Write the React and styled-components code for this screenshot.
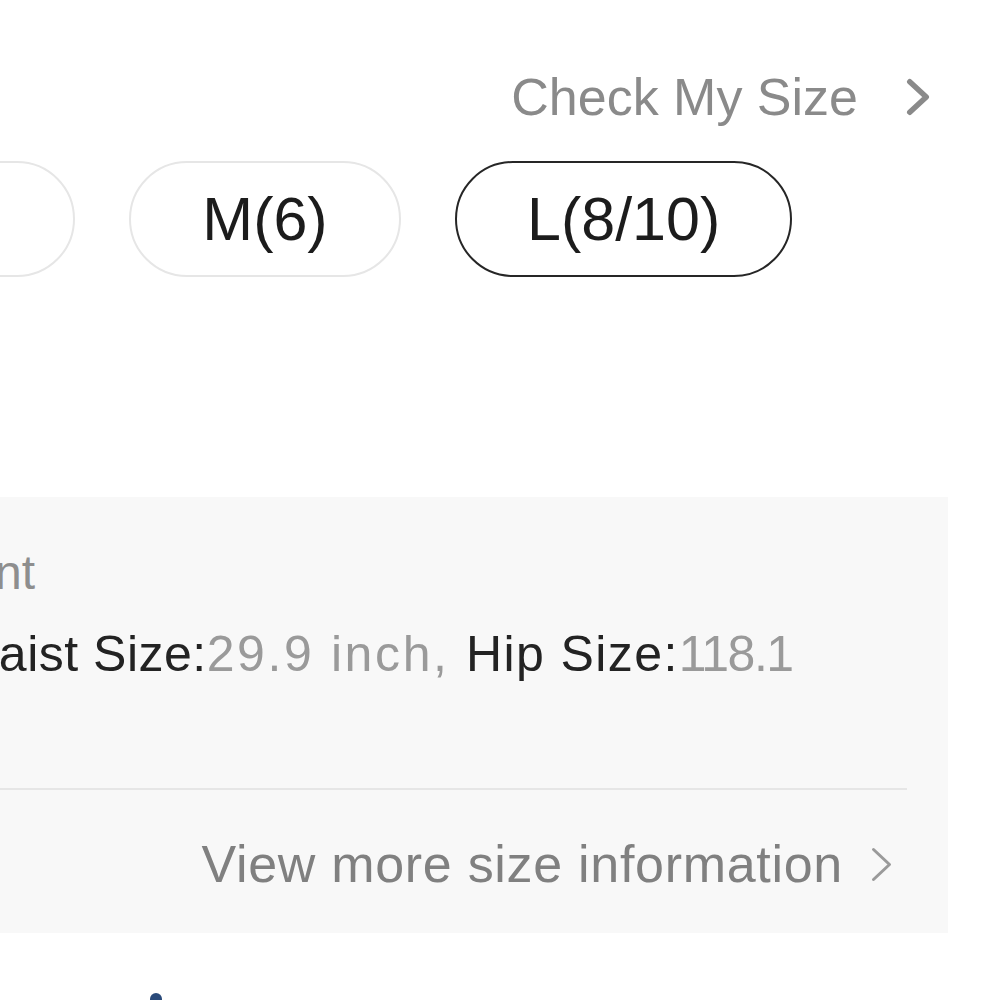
import React from "react";
import styled, { createGlobalStyle } from "styled-components";

const Global = createGlobalStyle`
  html, body { margin: 0; padding: 0; background: #ffffff; }
  body { font-family: "Liberation Sans", Arial, sans-serif; overflow: hidden; }
`;

const Page = styled.div`
  width: 1000px;
  height: 1000px;
  overflow: hidden;
  background: #fff;
  display: flex;
  flex-direction: column;
`;

const HeaderRow = styled.div`
  margin-top: 67px;
  display: flex;
  justify-content: flex-end;
  align-items: center;
  gap: 48px;
  padding-right: 70px;
  height: 60px;
`;

const LinkText = styled.span`
  font-size: ${(p) => p.$size}px;
  line-height: 60px;
  color: ${(p) => p.$color};
  letter-spacing: ${(p) => p.$ls || 0}px;
  white-space: nowrap;
`;

const PillRow = styled.div`
  margin-top: 34px;
  margin-left: -197px;
  display: flex;
  gap: 54px;
`;

const Pill = styled.div`
  box-sizing: border-box;
  height: 116px;
  min-width: 272px;
  padding: 0 70px;
  border-radius: 58px;
  border: ${(p) => (p.$active ? "2.5px solid #262626" : "2px solid #e6e6e6")};
  display: flex;
  align-items: center;
  justify-content: center;
  font-size: 61px;
  color: #1c1c1c;
  white-space: nowrap;
`;

const Panel = styled.div`
  margin-top: 220px;
  margin-left: -200px;
  width: 1148px;
  box-sizing: border-box;
  background: #f8f8f8;
  padding: 46px 41px 39px 153px;
  display: flex;
  flex-direction: column;
`;

const LabelRow = styled.div`
  width: 82px;
  display: flex;
  justify-content: flex-end;
  white-space: nowrap;
  font-size: 48px;
  line-height: 60px;
  color: #8e8e8e;
`;

const MeasureLine = styled.div`
  margin-top: 21px;
  font-size: 50px;
  line-height: 60px;
  white-space: nowrap;
`;

const Key = styled.span`
  color: #232323;
  letter-spacing: ${(p) => p.$ls || 0}px;
`;

const Val = styled.span`
  color: #9a9a9a;
  letter-spacing: ${(p) => p.$ls || 0}px;
`;

const Divider = styled.div`
  margin-top: 104px;
  height: 2px;
  background: #e6e6e6;
`;

const MoreRow = styled.div`
  margin-top: 44px;
  display: flex;
  justify-content: flex-end;
  align-items: center;
  gap: 28px;
  padding-right: 15px;
  height: 60px;
`;

const Footer = styled.div`
  margin-top: 60px;
  padding-left: 150px;
`;

const BlueMark = styled.div`
  width: 12px;
  height: 12px;
  border-radius: 50%;
  background: #2a4a7a;
`;

const Chevron = ({ w, h, sw, color }) => (
  <svg width={w} height={h} viewBox={`0 0 ${w} ${h}`} fill="none">
    <path
      d={`M${sw / 2 + 1} ${sw / 2 + 1} L${w - sw / 2 - 1} ${h / 2} L${sw / 2 + 1} ${h - sw / 2 - 1}`}
      stroke={color}
      strokeWidth={sw}
      strokeLinecap="round"
      strokeLinejoin="round"
    />
  </svg>
);

export default function App() {
  const sizes = [
    { label: "S(4)" },
    { label: "M(6)" },
    { label: "L(8/10)", active: true },
  ];
  return (
    <Page>
      <Global />
      <HeaderRow>
        <LinkText $size={52} $color="#8a8a8a">Check My Size</LinkText>
        <Chevron w={24} h={38} sw={5.5} color="#8a8a8a" />
      </HeaderRow>
      <PillRow>
        {sizes.map((s) => (
          <Pill key={s.label} $active={s.active}>
            {s.label}
          </Pill>
        ))}
      </PillRow>
      <Panel>
        <LabelRow>Product Measurement</LabelRow>
        <MeasureLine>
          <Key $ls={0.5}>Waist Size:</Key>
          <Val $ls={2.6}>29.9 inch, </Val>
          <Key $ls={1.4}>Hip Size:</Key>
          <Val $ls={-1.5}>118.1</Val>
        </MeasureLine>
        <Divider />
        <MoreRow>
          <LinkText $size={52} $color="#808080" $ls={0.7}>
            View more size information
          </LinkText>
          <Chevron w={21} h={35} sw={3} color="#9a9a9a" />
        </MoreRow>
      </Panel>
      <Footer>
        <BlueMark />
      </Footer>
    </Page>
  );
}
